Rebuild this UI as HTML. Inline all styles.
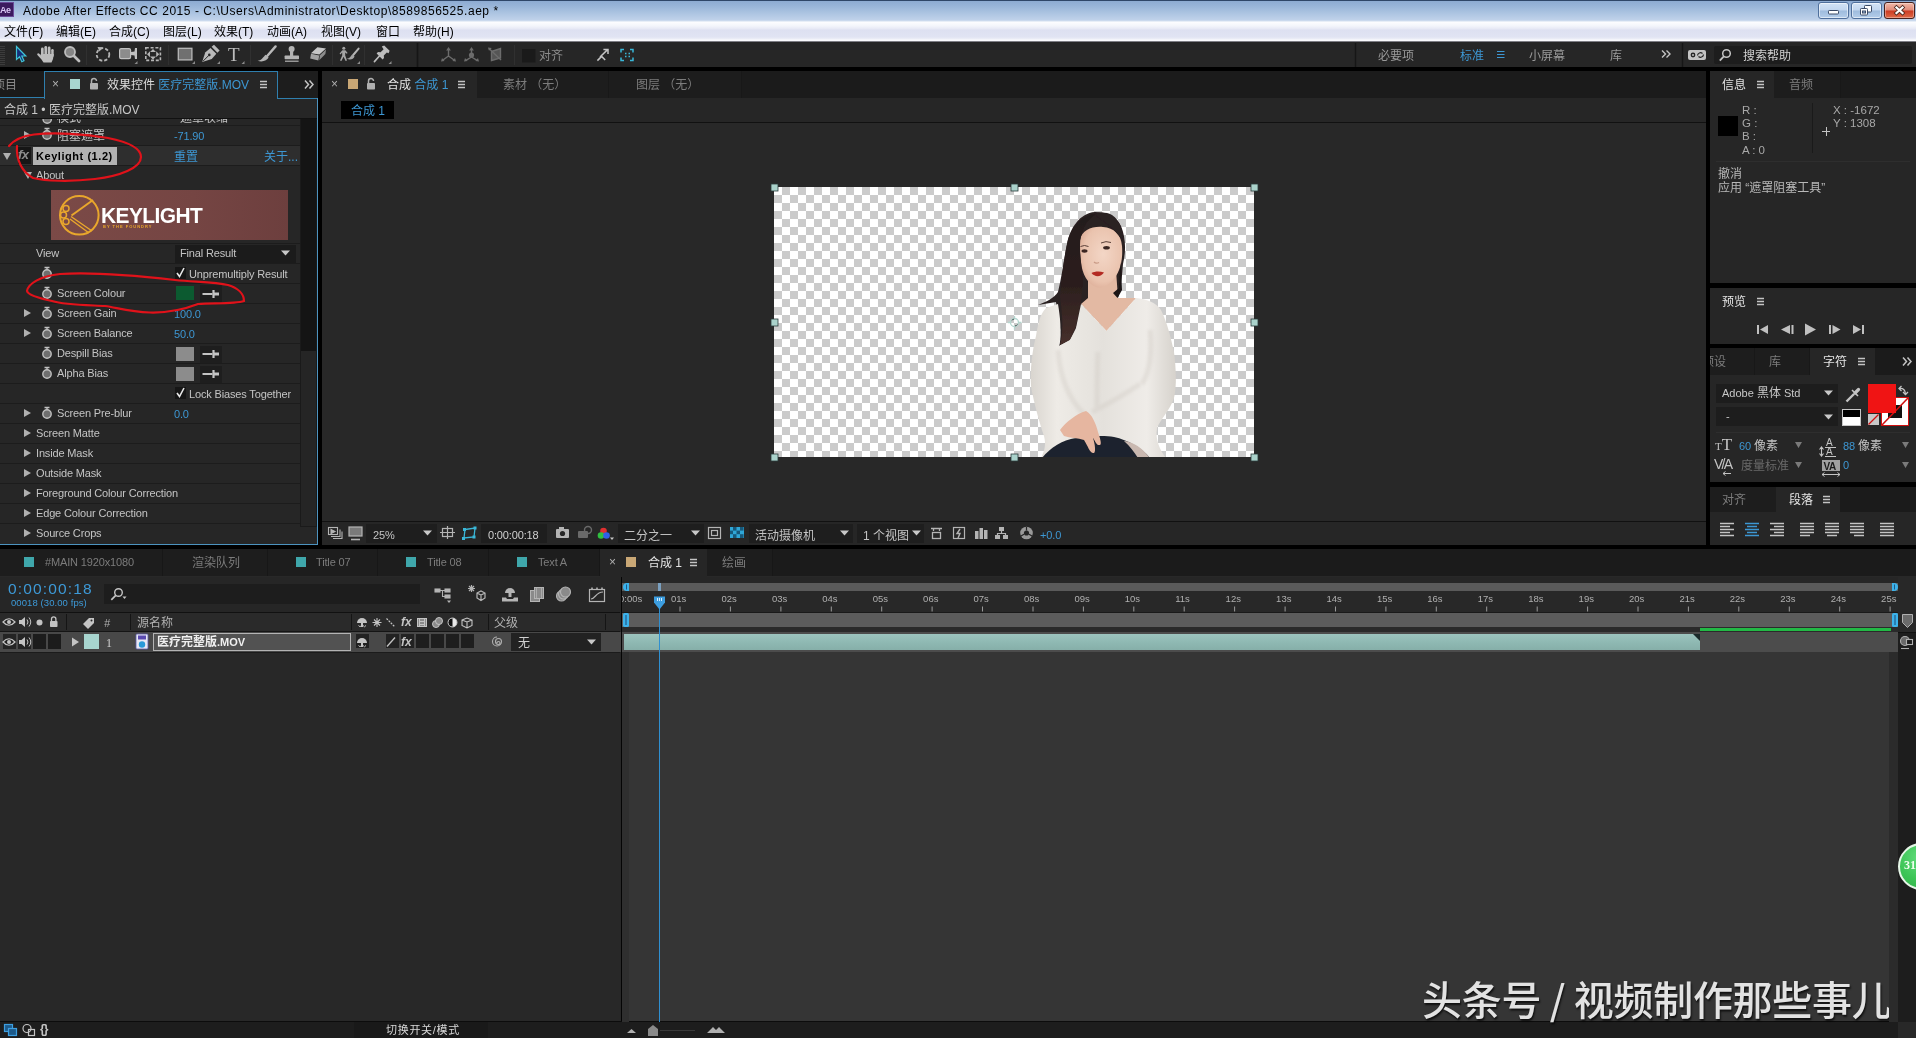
<!DOCTYPE html>
<html lang="zh">
<head>
<meta charset="utf-8">
<title>Adobe After Effects CC 2015</title>
<style>
*{box-sizing:border-box;margin:0;padding:0}
html,body{width:1916px;height:1038px;overflow:hidden;background:#000}
body{opacity:0.999;position:relative;font-family:"Liberation Sans","Noto Sans CJK SC",sans-serif;font-size:11px;color:#c4c4c4;line-height:1}
.a{position:absolute}
.t{position:absolute;white-space:nowrap;line-height:14px;height:14px}
.cj{font-size:12px}
.t.cj{margin-top:1px}
.blue{color:#3d97d3}
.en{letter-spacing:-0.15px}
.dim{color:#7d7d7d}
svg{position:absolute;overflow:visible}
/* title bar */
#title{left:0;top:0;width:1916px;height:22px;background:linear-gradient(#2f4668 0,#2f4668 1px,#8dabd2 1px,#98b4d8 6px,#a9c2e0 12px,#c0d2ea 20px,#d4e0f0 21px,#fbfcfe 22px)}
#menu{left:0;top:22px;width:1916px;height:20px;background:linear-gradient(#fdfdff 0,#f3f5fb 4px,#e6e8f5 7px,#dde0f1 8px,#e1e4f3 15px,#eceef7 17px,#fafafd 18px,#fafafd 19px,#8e8e96 19px,#6e6e74 20px)}
#menu .t{color:#000;font-size:12px;top:3px}
#toolbar{left:0;top:42px;width:1916px;height:25px;background:#262626}
/* generic panel colours */
.pbg{background:#262626}
.tabbar{background:#1b1b1b}
.row{position:absolute;left:0;width:300px;height:20px;border-top:1px solid #1c1c1c}
</style>
</head>
<body>
<!-- TITLE BAR -->
<div id="title" class="a"></div>
<div class="a" style="left:0;top:2px;width:14px;height:15px;background:#3b1a5e;border:1px solid #6b4a98;border-left:0"></div>
<div class="t" style="left:0;top:3px;font-size:9px;color:#d9c8f5;font-weight:bold;letter-spacing:-0.5px">Ae</div>
<div class="t" style="left:23px;top:4px;font-size:12px;color:#000;letter-spacing:0.55px">Adobe After Effects CC 2015 - C:\Users\Administrator\Desktop\8589856525.aep *</div>
<div class="a" style="left:1818px;top:2px;width:31px;height:17px;border:1px solid #4f6f9c;border-radius:3px;background:linear-gradient(#d3e3f6 0,#c2d6ef 48%,#9ebbdd 52%,#b4cdea 100%);box-shadow:inset 0 0 0 1px rgba(255,255,255,0.55)"></div>
<div class="a" style="left:1851px;top:2px;width:31px;height:17px;border:1px solid #4f6f9c;border-radius:3px;background:linear-gradient(#d3e3f6 0,#c2d6ef 48%,#9ebbdd 52%,#b4cdea 100%);box-shadow:inset 0 0 0 1px rgba(255,255,255,0.55)"></div>
<div class="a" style="left:1884px;top:2px;width:31px;height:17px;border:1px solid #47201c;border-radius:3px;background:linear-gradient(#f0b8a8 0,#e08a78 48%,#cc3a22 52%,#de6a48 100%);box-shadow:inset 0 0 0 1px rgba(255,255,255,0.35)"></div>
<svg style="left:0;top:0" width="1916" height="22" viewBox="0 0 1916 22"><rect x="1828.500" y="10.500" width="10" height="3.500" rx="0.800" fill="#fff" stroke="#3a4a66" stroke-width="1"/><g fill="#fff" stroke="#3a4a66" stroke-width="1"><rect x="1864.500" y="5.500" width="7" height="6.500" rx="0.800"/><rect x="1860.500" y="8.500" width="7" height="6.500" rx="0.800"/><rect x="1862.500" y="11" width="3" height="2" fill="#9ab4d6"/></g><path d="M1896.500 7.500l6 5.500M1902.500 7.500l-6 5.500" stroke="#4a2a22" stroke-width="3.800" stroke-linecap="square"/><path d="M1896.500 7.500l6 5.500M1902.500 7.500l-6 5.500" stroke="#fff" stroke-width="2.300" stroke-linecap="square"/></svg>
<!-- MENU BAR -->
<div id="menu" class="a">
<div class="t" style="left:4px">文件(F)</div>
<div class="t" style="left:56px">编辑(E)</div>
<div class="t" style="left:109px">合成(C)</div>
<div class="t" style="left:163px">图层(L)</div>
<div class="t" style="left:214px">效果(T)</div>
<div class="t" style="left:267px">动画(A)</div>
<div class="t" style="left:321px">视图(V)</div>
<div class="t" style="left:376px">窗口</div>
<div class="t" style="left:413px">帮助(H)</div>
</div>
<!-- TOOLBAR -->
<div id="toolbar" class="a"></div>
<!--TB-START--><div class="a" style="left:1714px;top:46px;width:198px;height:18px;background:#1d1d1d;border-radius:2px"></div><svg style="left:0;top:0" width="1916" height="1038" viewBox="0 0 1916 1038" fill="#b4b4b4" stroke="none">
<!-- grip -->
<g stroke="#3c3c3c" stroke-width="1"><path d="M0 46.5h5M0 48.5h5M0 50.5h5M0 52.5h5M0 54.5h5M0 56.5h5M0 58.5h5M0 60.5h5M0 62.5h5M0 64.5h5"/></g>
<!-- selection arrow -->
<path d="M16.5 46.5 L16.5 59.5 L19.6 56.8 L21.8 61.8 L24 60.8 L21.8 56 L25.8 56 Z" fill="#16307a" stroke="#3fc4d6" stroke-width="1.2" stroke-linejoin="miter"/>
<!-- hand -->
<g fill="#bdbdbd"><rect x="41" y="47.5" width="2.7" height="9" rx="1.3"/><rect x="44.4" y="46" width="2.7" height="10" rx="1.3"/><rect x="47.8" y="46.6" width="2.7" height="10" rx="1.3"/><rect x="51.2" y="49" width="2.5" height="8" rx="1.2"/><path d="M40.6 54 L53.8 54 L53 59 L51.5 62.5 L43.5 62.5 L41.5 59.5 L37.2 54.8 Q37 52.6 39 53.4 L41 55.5 Z"/></g>
<!-- magnifier -->
<circle cx="70" cy="52" r="5" fill="#858585" stroke="#bdbdbd" stroke-width="1.8"/><path d="M74 56 L79 61" stroke="#bdbdbd" stroke-width="2.8" stroke-linecap="round"/>
<!-- separators -->
<g stroke="#303030" stroke-width="1"><path d="M86.5 45v20M168.5 45v20M250.5 45v20M332.5 45v20M364.5 45v20M514.5 45v20"/></g>
<path d="M417.5 43v24" stroke="#161616" stroke-width="1.6"/>
<!-- rotate -->
<circle cx="103" cy="54.5" r="6.3" fill="none" stroke="#b4b4b4" stroke-width="1.8" stroke-dasharray="3.2 2"/><path d="M97.5 47 L103 47.2 L99.5 51.6 Z"/>
<!-- camera -->
<rect x="119.6" y="48.6" width="11" height="10" rx="1.6" fill="#8c8c8c" stroke="#c0c0c0" stroke-width="1.2"/><path d="M131 52 L134.5 51.5 L135 48 L137 48 L137 59 L135 59 L134.5 55.5 L131 55 Z" fill="#c0c0c0"/><path d="M137.5 61 v3 h-3 z" fill="#8a8a8a"/>
<!-- pan behind -->
<rect x="145.8" y="47.8" width="14.6" height="12.6" fill="none" stroke="#b4b4b4" stroke-width="1.6" stroke-dasharray="3 1.8"/><path d="M153 49 l3 3 h-6z M153 59.4 l3 -3 h-6z M147 54.2 l3 -3 v6z M159.2 54.2 l-3 -3 v6z" fill="#b4b4b4"/>
<!-- rectangle -->
<rect x="178.3" y="48.3" width="13.6" height="11.6" fill="#707070" stroke="#b9b9b9" stroke-width="1.3"/><path d="M195 61 v3 h-3 z M220 61 v3 h-3 z M244.5 61 v3 h-3 z M360 61 v3 h-3 z M391.5 61 v3 h-3 z" fill="#8a8a8a"/>
<!-- pen -->
<path d="M202.2 62 L205.2 52.5 L210.5 48 L216.3 53.8 L211.8 59 Z" fill="#b9b9b9"/><path d="M211.6 46.8 L214 44.8 L219.6 50.4 L217.4 52.8 Z" fill="#b9b9b9"/><path d="M203 61.2 L208.6 55.6" stroke="#262626" stroke-width="1"/><circle cx="209.3" cy="54.9" r="1.3" fill="#262626"/>
<!-- brush -->
<path d="M275.6 46.4 L267.2 56" stroke="#b9b9b9" stroke-width="2.4" stroke-linecap="round"/><path d="M257.6 60.8 C262 60.4 263.4 56.6 265.6 54.8 L268.6 57.6 C267 60.6 262.6 62.4 257.6 60.8 Z"/>
<!-- stamp -->
<circle cx="291.6" cy="49" r="3"/><rect x="290" y="50" width="3.2" height="6"/><rect x="284.6" y="55.6" width="14.4" height="3.6" rx="0.6"/><rect x="285" y="60.6" width="13.6" height="1.2"/>
<!-- eraser -->
<path d="M317.4 47.2 L326 48.4 L319.4 54.6 L311 53.2 Z" fill="#c6c6c6"/><path d="M311 53.8 L319.2 55.4 L318.4 60.4 L310.2 58.6 Z" fill="#a2a2a2"/><path d="M319.9 55.2 L326 49.4 L325.4 54 L319.2 60.2 Z" fill="#8c8c8c"/>
<!-- roto brush -->
<g fill="#a4a4a4"><circle cx="343.8" cy="48.2" r="1.5"/><path d="M342.4 50.2 L345.4 50.2 L347.6 53 L346.8 53.8 L345.2 52.6 L345.2 55.4 L347 60.6 L345.6 61 L343.6 56.8 L341.4 61 L340 60.4 L342.2 55.4 L342.2 52.6 L340.4 54.4 L339.6 53.6 Z"/><path d="M358.6 48.6 L353.2 55" stroke="#b4b4b4" stroke-width="2" stroke-linecap="round"/><path d="M346.6 58.6 C350 58.4 350.6 55.8 352.2 54.4 L354.6 56.6 C353.4 59.4 350 60.4 346.6 58.6 Z"/></g>
<!-- pin -->
<g fill="#bdbdbd"><path d="M381.8 46.4 L384.2 45.4 L389.6 50.8 L388.6 53.2 L386.8 52.4 L383.8 55.4 L384 58 L382.6 59.4 L376.6 53.4 L378 52 L380.6 52.2 L383.6 49.2 Z"/><path d="M379.4 56 L374.4 61.6" stroke="#bdbdbd" stroke-width="1.6" stroke-linecap="round"/></g>
<!-- axis icons (dim) -->
<g stroke="#6c6c6c" stroke-width="1.4" fill="#6c6c6c"><path d="M448.5 50v6M448.5 56l-5.5 4M448.5 56l5.5 4" fill="none"/><path d="M448.5 47l2.4 3.6h-4.8z M441 61.6l1-3.6 2.6 3z M456 61.6l-1-3.6-2.6 3z" stroke="none"/>
<path d="M471.5 50v6M471.5 57l-5.5 3.4M471.5 57l5.5 3.4" fill="none"/><circle cx="471.5" cy="55" r="2.6" stroke="none"/><path d="M471.5 47l2.4 3.6h-4.8z M464 61.6l1-3.6 2.6 3z M479 61.6l-1-3.6-2.6 3z" stroke="none"/>
<path d="M491.5 51.5 L500.5 48.5 L500.5 58 L491.5 60.5 Z" fill="#555" /><path d="M489 48.5 L501 60" fill="none"/><path d="M488 47.4l3.8 .6-2.8 2.8z" stroke="none"/></g>
<!-- snapping checkbox -->
<rect x="522" y="49" width="13.5" height="13.5" fill="#1a1a1a"/>
<!-- expand arrow -->
<g stroke="#c4c4c4" stroke-width="1.5" fill="none"><path d="M600 57 L607.6 49.6M603.4 49.4h4.6v4.6M597.4 60.6l4.2-4.2 3.6 3.6"/></g>
<!-- snap icon -->
<g stroke="#3ab7d8" stroke-width="1.5" fill="none"><path d="M621 52.5v-3h3M630 49.500h3v3M633 57.500v3h-3M624 60.500h-3v-3"/><path d="M625 53.500h1.500M628.500 53.500h1.500M625 56.500h1.500M628.500 56.500h1.500" stroke-width="1.6"/></g>
<!-- right side: workspace -->
<path d="M1355.500 43v24M1682.500 43v24" stroke="#161616" stroke-width="1.4"/>
<g stroke="#3d97d3" stroke-width="1.2"><path d="M1497 51.500h7.500M1497 54.500h7.500M1497 57.500h7.500"/></g>
<g stroke="#c4c4c4" stroke-width="1.4" fill="none"><path d="M1662 50.500l3.500 3.500-3.500 3.500M1666.500 50.500l3.500 3.500-3.500 3.500"/></g>
<rect x="1688" y="50" width="18" height="10" rx="2" fill="#c4c4c4"/><circle cx="1693" cy="55" r="2.400" fill="#262626"/><circle cx="1693" cy="55" r="1" fill="#c4c4c4"/><path d="M1697.500 55.500 a3 3 0 0 1 5 -2 M1703.500 54.500 a3 3 0 0 1 -5 2" stroke="#262626" stroke-width="1.200" fill="none"/>
<circle cx="1726.500" cy="53.500" r="3.800" fill="none" stroke="#c4c4c4" stroke-width="1.500"/><path d="M1723.800 56.400l-4 4.200" stroke="#c4c4c4" stroke-width="1.800"/>
</svg>
<div class="t" style="left:228px;top:44px;font-family:'Liberation Serif',serif;font-size:19px;line-height:21px;height:21px;color:#bdbdbd">T</div>
<div class="t cj" style="left:539px;top:48px;color:#8c8c8c">对齐</div>
<div class="t cj" style="left:1378px;top:48px;color:#9a9a9a">必要项</div>
<div class="t cj blue" style="left:1460px;top:48px">标准</div>
<div class="t cj" style="left:1529px;top:48px;color:#9a9a9a">小屏幕</div>
<div class="t cj" style="left:1610px;top:48px;color:#9a9a9a">库</div>
<div class="t cj" style="left:1743px;top:48px;color:#d0d0d0">搜索帮助</div>
<!--TB-END-->
<!-- LEFT PANEL -->
<div id="left" class="a pbg" style="left:0;top:71px;width:318px;height:474px"></div>
<!--LEFT-START--><div class="a" style="left:0;top:71px;width:318px;height:27px;background:#1d1d1d"></div>
<div class="a" style="left:0;top:71px;width:44px;height:27px;background:#1b1b1b;border-bottom:1px solid #2f7fae"></div>
<div class="a" style="left:44px;top:71px;width:234px;height:28px;background:#262626;border:1px solid #2f7fae;border-bottom:0"></div>
<div class="a" style="left:277px;top:98px;width:41px;height:1px;background:#2f7fae"></div>
<div class="a" style="left:317px;top:98px;width:1px;height:447px;background:#4d93bf"></div>
<div class="a" style="left:0;top:544px;width:318px;height:1px;background:#4d93bf"></div>
<div class="t cj" style="left:-7px;top:77px;color:#8a8a8a">项目</div>
<div class="t" style="left:52px;top:77px;font-size:12px;color:#b0b0b0">×</div>
<div class="a" style="left:70px;top:79px;width:10px;height:10px;background:#a8d5cf"></div>
<div class="t cj" style="left:107px;top:77px;color:#dcdcdc">效果控件 <span class="blue">医疗完整版.MOV</span></div>
<div class="t cj" style="left:4px;top:102px;color:#c8c8c8">合成 1 • 医疗完整版.MOV</div>
<div class="a" style="left:0;top:118px;width:317px;height:1px;background:#111"></div>
<div class="a" style="left:300px;top:119px;width:17px;height:408px;background:#252525;border:1px solid #1a1a1a"></div>
<div class="a" style="left:301px;top:119px;width:15px;height:232px;background:#141414"></div>
<div class="a" style="left:0;top:125px;width:300px;height:1px;background:#1c1c1c"></div>
<div class="a" style="left:0;top:145px;width:300px;height:1px;background:#1c1c1c"></div>
<div class="a" style="left:0;top:165px;width:300px;height:1px;background:#1c1c1c"></div>
<div class="a" style="left:0;top:243px;width:300px;height:1px;background:#1c1c1c"></div>
<div class="a" style="left:0;top:263px;width:300px;height:1px;background:#1c1c1c"></div>
<div class="a" style="left:0;top:283px;width:300px;height:1px;background:#1c1c1c"></div>
<div class="a" style="left:0;top:303px;width:300px;height:1px;background:#1c1c1c"></div>
<div class="a" style="left:0;top:323px;width:300px;height:1px;background:#1c1c1c"></div>
<div class="a" style="left:0;top:343px;width:300px;height:1px;background:#1c1c1c"></div>
<div class="a" style="left:0;top:363px;width:300px;height:1px;background:#1c1c1c"></div>
<div class="a" style="left:0;top:383px;width:300px;height:1px;background:#1c1c1c"></div>
<div class="a" style="left:0;top:403px;width:300px;height:1px;background:#1c1c1c"></div>
<div class="a" style="left:0;top:423px;width:300px;height:1px;background:#1c1c1c"></div>
<div class="a" style="left:0;top:443px;width:300px;height:1px;background:#1c1c1c"></div>
<div class="a" style="left:0;top:463px;width:300px;height:1px;background:#1c1c1c"></div>
<div class="a" style="left:0;top:483px;width:300px;height:1px;background:#1c1c1c"></div>
<div class="a" style="left:0;top:503px;width:300px;height:1px;background:#1c1c1c"></div>
<div class="a" style="left:0;top:523px;width:300px;height:1px;background:#1c1c1c"></div>
<div class="a" style="left:0;top:119px;width:300px;height:6px;overflow:hidden"><div class="t cj" style="left:57px;top:-9px">模式</div><div class="t cj" style="left:180px;top:-9px">遮罩收缩</div></div>
<div class="a" style="left:0;top:146px;width:300px;height:19px;background:#2e2e2e"></div>
<div class="a" style="left:33px;top:147px;width:84px;height:18px;background:#b2b2b2"></div>
<div class="t" style="left:36px;top:149px;color:#000;font-weight:bold;font-size:11px;letter-spacing:0.55px">Keylight (1.2)</div>
<div class="a" style="left:18px;top:147px;width:13px;height:17px;background:#161616"></div>
<div class="t" style="left:18px;top:148px;color:#8e8e8e;font-style:italic;font-weight:bold;font-size:13px;letter-spacing:-0.5px">fx</div>
<div class="t cj blue" style="left:174px;top:149px">重置</div>
<div class="t cj blue" style="left:264px;top:149px">关于...</div>
<div class="t cj" style="left:57px;top:128px">阻塞遮罩</div>
<div class="t en blue" style="left:174px;top:129px">-71.90</div>
<div class="t en " style="left:36px;top:168px">About</div>
<div class="t en " style="left:36px;top:246px">View</div>
<div class="a" style="left:175px;top:245px;width:121px;height:18px;background:#1b1b1b"></div>
<div class="t en " style="left:180px;top:246px">Final Result</div>
<div class="t en " style="left:189px;top:267px">Unpremultiply Result</div>
<div class="t en " style="left:57px;top:286px">Screen Colour</div>
<div class="t en " style="left:57px;top:306px">Screen Gain</div>
<div class="t en blue" style="left:174px;top:307px">100.0</div>
<div class="t en " style="left:57px;top:326px">Screen Balance</div>
<div class="t en blue" style="left:174px;top:327px">50.0</div>
<div class="t en " style="left:57px;top:346px">Despill Bias</div>
<div class="t en " style="left:57px;top:366px">Alpha Bias</div>
<div class="t en " style="left:189px;top:387px">Lock Biases Together</div>
<div class="t en " style="left:57px;top:406px">Screen Pre-blur</div>
<div class="t en blue" style="left:174px;top:407px">0.0</div>
<div class="t en " style="left:36px;top:426px">Screen Matte</div>
<div class="t en " style="left:36px;top:446px">Inside Mask</div>
<div class="t en " style="left:36px;top:466px">Outside Mask</div>
<div class="t en " style="left:36px;top:486px">Foreground Colour Correction</div>
<div class="t en " style="left:36px;top:506px">Edge Colour Correction</div>
<div class="t en " style="left:36px;top:526px">Source Crops</div>
<div class="a" style="left:176px;top:286px;width:18px;height:14px;background:#0c5a30"></div>
<div class="a" style="left:176px;top:347px;width:18px;height:14px;background:#8c8c8c"></div>
<div class="a" style="left:176px;top:367px;width:18px;height:14px;background:#8c8c8c"></div>
<div class="a" style="left:200px;top:285px;width:22px;height:17px;background:#1e1e1e"></div>
<div class="a" style="left:200px;top:346px;width:22px;height:17px;background:#1e1e1e"></div>
<div class="a" style="left:200px;top:366px;width:22px;height:17px;background:#1e1e1e"></div>
<div class="a" style="left:175px;top:267px;width:11px;height:12px;background:#161616"></div>
<div class="a" style="left:175px;top:387px;width:11px;height:12px;background:#161616"></div>
<div class="a" style="left:51px;top:190px;width:237px;height:50px;background:linear-gradient(90deg,#7b4a47,#754543 60%,#6d3f3e)"></div>
<div class="t" style="left:101px;top:203px;font-size:22px;line-height:26px;height:26px;font-weight:bold;color:#fff;letter-spacing:-0.6px;transform:scaleX(0.95);transform-origin:0 0">KEYLIGHT</div>
<div class="t" style="left:103px;top:224px;font-size:4px;line-height:6px;height:6px;font-weight:bold;color:#e9a72c;letter-spacing:1px">BY THE FOUNDRY</div>
<svg style="left:0;top:0" width="1916" height="1038" viewBox="0 0 1916 1038">
<g fill="#b0b0b0"><rect x="90" y="83" width="8" height="6.500" rx="0.800"/><path d="M91.500 83 v-2 a2.500 2.500 0 0 1 5 0" fill="none" stroke="#b0b0b0" stroke-width="1.500"/></g>
<g stroke="#c4c4c4" stroke-width="1.300"><path d="M260 81.500h7M260 84.500h7M260 87.500h7"/></g>
<g stroke="#c4c4c4" stroke-width="1.500" fill="none"><path d="M305 80.500l3.500 4-3.500 4M309.500 80.500l3.500 4-3.500 4"/></g>
<path d="M24 131 L31 135 L24 139 Z" fill="#b0b0b0"/>
<path d="M3 153 L11 153 L7 160 Z" fill="#b0b0b0"/>
<path d="M24 172 L32 172 L28 179 Z" fill="#b0b0b0"/>
<path d="M24 309 L31 313 L24 317 Z" fill="#b0b0b0"/>
<path d="M24 329 L31 333 L24 337 Z" fill="#b0b0b0"/>
<path d="M24 409 L31 413 L24 417 Z" fill="#b0b0b0"/>
<path d="M24 429 L31 433 L24 437 Z" fill="#b0b0b0"/>
<path d="M24 449 L31 453 L24 457 Z" fill="#b0b0b0"/>
<path d="M24 469 L31 473 L24 477 Z" fill="#b0b0b0"/>
<path d="M24 489 L31 493 L24 497 Z" fill="#b0b0b0"/>
<path d="M24 509 L31 513 L24 517 Z" fill="#b0b0b0"/>
<path d="M24 529 L31 533 L24 537 Z" fill="#b0b0b0"/>
<circle cx="47" cy="135" r="4.200" fill="#6e6e6e" stroke="#c0c0c0" stroke-width="1.400"/><path d="M44.5 128.5h5M47 128.5v2" stroke="#c0c0c0" stroke-width="1.400" fill="none"/>
<circle cx="47" cy="274" r="4.200" fill="#6e6e6e" stroke="#c0c0c0" stroke-width="1.400"/><path d="M44.5 267.5h5M47 267.5v2" stroke="#c0c0c0" stroke-width="1.400" fill="none"/>
<circle cx="47" cy="294" r="4.200" fill="#6e6e6e" stroke="#c0c0c0" stroke-width="1.400"/><path d="M44.5 287.5h5M47 287.5v2" stroke="#c0c0c0" stroke-width="1.400" fill="none"/>
<circle cx="47" cy="314" r="4.200" fill="#6e6e6e" stroke="#c0c0c0" stroke-width="1.400"/><path d="M44.5 307.5h5M47 307.5v2" stroke="#c0c0c0" stroke-width="1.400" fill="none"/>
<circle cx="47" cy="334" r="4.200" fill="#6e6e6e" stroke="#c0c0c0" stroke-width="1.400"/><path d="M44.5 327.5h5M47 327.5v2" stroke="#c0c0c0" stroke-width="1.400" fill="none"/>
<circle cx="47" cy="354" r="4.200" fill="#6e6e6e" stroke="#c0c0c0" stroke-width="1.400"/><path d="M44.5 347.5h5M47 347.5v2" stroke="#c0c0c0" stroke-width="1.400" fill="none"/>
<circle cx="47" cy="374" r="4.200" fill="#6e6e6e" stroke="#c0c0c0" stroke-width="1.400"/><path d="M44.5 367.5h5M47 367.5v2" stroke="#c0c0c0" stroke-width="1.400" fill="none"/>
<circle cx="47" cy="414" r="4.200" fill="#6e6e6e" stroke="#c0c0c0" stroke-width="1.400"/><path d="M44.5 407.5h5M47 407.5v2" stroke="#c0c0c0" stroke-width="1.400" fill="none"/>
<path d="M43 119 a4.200 4.200 0 0 0 8.400 0" fill="#6e6e6e" stroke="#c0c0c0" stroke-width="1.400"/>
<path d="M281 250.500h9l-4.500 5z" fill="#c8c8c8"/>
<path d="M177 273l2.500 3.500 4.500-8.500" stroke="#e8e8e8" stroke-width="1.600" fill="none"/>
<path d="M177 393l2.500 3.500 4.500-8.500" stroke="#e8e8e8" stroke-width="1.600" fill="none"/>
<g stroke="#c4c4c4" fill="#c4c4c4"><path d="M202.500 294h10" stroke-width="2"/><path d="M213.500 290v8" stroke-width="2.200"/><path d="M214 294h5" stroke-width="3"/></g>
<g stroke="#c4c4c4" fill="#c4c4c4"><path d="M202.500 354h10" stroke-width="2"/><path d="M213.500 350v8" stroke-width="2.200"/><path d="M214 354h5" stroke-width="3"/></g>
<g stroke="#c4c4c4" fill="#c4c4c4"><path d="M202.500 374h10" stroke-width="2"/><path d="M213.500 370v8" stroke-width="2.200"/><path d="M214 374h5" stroke-width="3"/></g>
<g stroke="#e9a72c" stroke-width="2" fill="none"><circle cx="79.300" cy="215.300" r="19.300"/><path d="M93 200 L71.500 215.500"/><path d="M71 216.500 L92 231 M70 219 L89 233" stroke-width="1.400"/><circle cx="66" cy="208.500" r="3" stroke-width="1.500"/><circle cx="63.500" cy="215" r="3" stroke-width="1.500"/><circle cx="66" cy="221.500" r="3" stroke-width="1.500"/></g>
<g stroke="#e0121a" stroke-width="2.200" fill="none" stroke-linecap="round"><path d="M9 146 C14 140 22 136 34 134.500 C55 132 85 134 108 138 C128 142 141 148 141 157 C141 168 120 176 95 179 C70 182 45 181 33 178 C22 172 16 160 17 146"/><path d="M60 274 C90 272 140 276 175 280 C195 282 215 282 228 285 C238 288 244 294 244 301 C235 304 215 303 198 304 C185 309 170 313 150 312.500 C130 312 118 308 105 306 C85 305 65 305 52 301 C38 298 28 295 27 291 C28 284 40 276 60 274"/></g>
</svg><!--LEFT-END-->
<!-- COMP PANEL -->
<div id="comp" class="a" style="left:322px;top:71px;width:1384px;height:474px;background:#282828"></div>
<!--COMP-START--><div class="a" style="left:322px;top:71px;width:1384px;height:27px;background:#1b1b1b"></div>
<div class="a" style="left:322px;top:71px;width:155px;height:28px;background:#262626"></div>
<div class="a" style="left:477px;top:71px;width:132px;height:27px;background:#1d1d1d;border-right:1px solid #181818"></div>
<div class="a" style="left:609px;top:71px;width:133px;height:27px;background:#1d1d1d;border-right:1px solid #181818"></div>
<div class="a" style="left:322px;top:98px;width:1384px;height:24px;background:#262626"></div>
<div class="a" style="left:322px;top:122px;width:1384px;height:1px;background:#111"></div>
<div class="t" style="left:331px;top:77px;font-size:12px;color:#b0b0b0">×</div>
<div class="a" style="left:348px;top:79px;width:10px;height:10px;background:#c9a775"></div>
<div class="t cj" style="left:387px;top:77px;color:#e4e4e4">合成 <span class="blue">合成 1</span></div>
<div class="t cj" style="left:503px;top:77px;color:#7c7c7c">素材 （无）</div>
<div class="t cj" style="left:636px;top:77px;color:#7c7c7c">图层 （无）</div>
<div class="a" style="left:341px;top:101px;width:53px;height:18px;background:#000"></div>
<div class="t cj blue" style="left:351px;top:103px">合成 1</div>
<div class="a" style="left:774px;top:187px;width:480px;height:270px;background-color:#fff;background-image:conic-gradient(#cbcbcb 0 25%,#fff 0 50%,#cbcbcb 0 75%,#fff 0);background-size:16px 16px;background-position:0 0"></div>
<div class="a" style="left:322px;top:521px;width:1384px;height:1px;background:#111"></div>
<div class="a" style="left:322px;top:522px;width:1384px;height:23px;background:#262626"></div>
<div class="a" style="left:366px;top:524px;width:71px;height:19px;background:#1e1e1e"></div>
<div class="a" style="left:481px;top:524px;width:66px;height:19px;background:#1e1e1e"></div>
<div class="a" style="left:618px;top:524px;width:86px;height:19px;background:#1e1e1e"></div>
<div class="a" style="left:749px;top:524px;width:104px;height:19px;background:#1e1e1e"></div>
<div class="a" style="left:857px;top:524px;width:67px;height:19px;background:#1e1e1e"></div>
<div class="t en" style="left:373px;top:528px">25%</div>
<div class="t en" style="left:488px;top:528px;color:#d0d0d0">0:00:00:18</div>
<div class="t cj" style="left:624px;top:528px">二分之一</div>
<div class="t cj" style="left:755px;top:528px">活动摄像机</div>
<div class="t cj" style="left:863px;top:528px">1 个视图</div>
<div class="t en blue" style="left:1040px;top:528px">+0.0</div>
<svg style="left:0;top:0" width="1916" height="1038" viewBox="0 0 1916 1038">
<defs><linearGradient id="sw" x1="0" x2="1" y1="0" y2="0"><stop offset="0" stop-color="#d9d5cf"/><stop offset="0.18" stop-color="#eeebe6"/><stop offset="0.5" stop-color="#e4e1dc"/><stop offset="0.8" stop-color="#efece8"/><stop offset="1" stop-color="#d6d2cc"/></linearGradient><linearGradient id="hr" x1="0" x2="0" y1="0" y2="1"><stop offset="0" stop-color="#231a1b"/><stop offset="0.55" stop-color="#2c1f1e"/><stop offset="1" stop-color="#47302b"/></linearGradient><radialGradient id="fc" cx="0.55" cy="0.45" r="0.65"><stop offset="0" stop-color="#f3d6c6"/><stop offset="0.7" stop-color="#eac3ae"/><stop offset="1" stop-color="#d9a892"/></radialGradient><filter id="sf2" x="-20%" y="-20%" width="140%" height="140%"><feGaussianBlur stdDeviation="1.6"/></filter><filter id="sf" x="-5%" y="-5%" width="110%" height="110%"><feGaussianBlur stdDeviation="0.45"/></filter><clipPath id="cv"><rect x="774" y="187" width="480" height="270"/></clipPath></defs>
<g clip-path="url(#cv)"><g filter="url(#sf)">
<path d="M1095 212 C1106 212 1116 216 1121 226 C1126 238 1126 252 1123 264 C1122 276 1121 290 1118 298 L1110 300 L1082 304 L1076 330 L1070 340 L1059 346 C1062 336 1060 326 1058 316 L1056 302 L1038 305 C1046 302 1054 298 1058 292 C1062 276 1064 258 1067 244 C1070 228 1080 213 1095 212 Z" fill="#2a2021"/>
<path d="M1088 276 L1116 270 L1118 298 L1136 298 L1106.500 331 L1081 304 L1088 298 Z" fill="#e3b9a3"/>
<path d="M1080 240 C1082 230 1092 226 1103 227 C1114 228 1121 234 1122 246 C1123 258 1121 270 1114 279 C1108 286 1101 289 1096 287 C1088 284 1082 274 1081 262 C1080 254 1079.500 246 1080 240 Z" fill="url(#fc)"/>
<path d="M1096 214 C1086 220 1080 232 1080 246 C1080 262 1083 274 1083 284 C1082 296 1080 310 1076 326 L1070 340 L1060 345 C1064 330 1062 312 1060 296 C1062 276 1064 256 1068 240 C1072 226 1082 215 1096 214 Z" fill="url(#hr)"/>
<path d="M1094 214 C1104 222 1114 228 1122 240 C1124 232 1120 220 1112 215 C1106 212 1100 212 1094 214 Z" fill="#2a2021"/>
<g fill="#3a2622"><ellipse cx="1084.500" cy="251" rx="3" ry="1.700"/><ellipse cx="1106.500" cy="247.800" rx="3.400" ry="1.800"/></g>
<path d="M1080.500 246.500 q4 -2 8 0 M1101 243 q5 -2.500 10 -0.500" stroke="#5a4038" stroke-width="1" fill="none"/>
<path d="M1094 262 q2 2 5 0.500" stroke="#c99a86" stroke-width="1.200" fill="none"/>
<path d="M1091.500 273 C1095 271 1100 271 1104 272.500 C1101 277 1095 277.500 1091.500 273 Z" fill="#b32a22"/>
<path d="M1120.500 262 L1119 288 L1113 293 L1117.500 298 L1122 290 Z" fill="#1c1718"/>
<path d="M1081 304 L1106.500 331 L1136 298 C1146 299 1156 302 1161 310 C1167 322 1171 338 1174 352 C1176 368 1177 386 1174 398 C1170 410 1160 420 1157 428 C1155 440 1160 450 1166 458 L1041 458 C1045 450 1046 444 1044 436 C1040 424 1034 404 1031 386 C1030 370 1032 352 1036 336 C1038 324 1040 314 1046 308 L1058 304 C1060 316 1062 332 1059 346 L1070 340 L1076 328 Z" fill="url(#sw)"/>
<g stroke="#cfc9c2" stroke-width="5" fill="none" opacity="0.380" filter="url(#sf2)"><path d="M1058 350 C1060 380 1070 400 1084 414"/><path d="M1140 384 C1128 392 1108 404 1092 412"/><path d="M1098 352 C1097 370 1097 390 1097 408"/><path d="M1150 330 C1152 350 1150 372 1142 384"/></g>
<path d="M1042 458 C1050 448 1062 440 1076 438 C1090 436 1104 435 1114 437 C1128 440 1142 448 1150 458 Z" fill="#1d232d"/>
<path d="M1124 441 C1134 442 1142 448 1149 457 L1138 458 C1134 452 1130 446 1124 441 Z" fill="#c9b8b0"/>
<path d="M1060 430 C1066 422 1076 414 1086 411 C1092 414 1096 424 1098 432 C1100 438 1102 444 1100 445 C1096 446 1095 440 1093 438 C1095 444 1096 452 1094 453 C1090 454 1088 446 1084 440 C1078 438 1070 438 1064 436 Z" fill="#e6b6a0"/>
</g></g>
<rect x="771" y="184" width="7" height="7" fill="#aad2cb" stroke="#2a3b3a" stroke-width="0.800"/>
<rect x="1011" y="184" width="7" height="7" fill="#aad2cb" stroke="#2a3b3a" stroke-width="0.800"/>
<rect x="1251" y="184" width="7" height="7" fill="#aad2cb" stroke="#2a3b3a" stroke-width="0.800"/>
<rect x="771" y="319" width="7" height="7" fill="#aad2cb" stroke="#2a3b3a" stroke-width="0.800"/>
<rect x="1251" y="319" width="7" height="7" fill="#aad2cb" stroke="#2a3b3a" stroke-width="0.800"/>
<rect x="771" y="454" width="7" height="7" fill="#aad2cb" stroke="#2a3b3a" stroke-width="0.800"/>
<rect x="1011" y="454" width="7" height="7" fill="#aad2cb" stroke="#2a3b3a" stroke-width="0.800"/>
<rect x="1251" y="454" width="7" height="7" fill="#aad2cb" stroke="#2a3b3a" stroke-width="0.800"/>
<g stroke="#b4d6cf" stroke-width="1.300" fill="none"><circle cx="1014.500" cy="322.500" r="4"/><path d="M1014.500 316v3M1014.500 326v3.500M1008 322.500h3M1018 322.500h3.500"/><path d="M1011.700 320.500a3.400 3.400 0 0 1 2.500-1.400M1017.500 324.500a3.400 3.400 0 0 1-2.500 1.400" stroke="#4a5a58" stroke-width="1"/></g>
<g fill="#b0b0b0"><rect x="367" y="83" width="8" height="6.500" rx="0.800"/><path d="M368.500 83 v-2 a2.500 2.500 0 0 1 5 0" fill="none" stroke="#b0b0b0" stroke-width="1.500"/></g>
<g stroke="#c4c4c4" stroke-width="1.300"><path d="M458 81.500h7M458 84.500h7M458 87.500h7"/></g>
<g stroke="#b4b4b4" stroke-width="1.100" fill="none"><rect x="328.500" y="527.500" width="9" height="7"/><path d="M331 536.500h9v-7M333 538.500h9v-7"/><path d="M331 529.500l4 2-4 2z" fill="#b4b4b4"/></g>
<rect x="349" y="527" width="13" height="9" fill="#7a7a7a" stroke="#b4b4b4" stroke-width="1.200"/><path d="M351 539.500h9" stroke="#b4b4b4" stroke-width="1.600"/>
<path d="M423 530.500h9l-4.500 5z M691 530.500h9l-4.500 5z M840 530.500h9l-4.500 5z M912 530.500h9l-4.500 5z" fill="#c8c8c8"/>
<g stroke="#b4b4b4" stroke-width="1.200" fill="none"><rect x="442.500" y="528.500" width="10" height="8"/><path d="M447.500 526v13M440 532.500h15"/></g>
<g stroke="#3ab7d8" stroke-width="1.300" fill="none"><path d="M465 529.500l10-1.500-1 9-10 1z"/></g><g fill="#3ab7d8"><rect x="463" y="528" width="3" height="3"/><rect x="473.500" y="526.500" width="3" height="3"/><rect x="472.500" y="535.500" width="3" height="3"/><rect x="462" y="537" width="3" height="3"/></g>
<rect x="556" y="529" width="13" height="9" rx="1" fill="#b4b4b4"/><rect x="559" y="527" width="5" height="3" fill="#b4b4b4"/><circle cx="562.500" cy="533.500" r="2.600" fill="#262626"/>
<g fill="#6a6a6a"><rect x="578" y="531" width="10" height="7" rx="1"/><circle cx="588" cy="530" r="3.500" fill="none" stroke="#6a6a6a" stroke-width="1.400"/></g>
<circle cx="603.500" cy="531" r="3.300" fill="#e03030"/><circle cx="601" cy="535.500" r="3.300" fill="#30c040"/><circle cx="606.500" cy="535.500" r="3.300" fill="#3060e8"/><path d="M610 537.500h4l-2 2.500z" fill="#c8c8c8"/>
<g stroke="#b4b4b4" stroke-width="1.200" fill="none"><rect x="708.500" y="527.500" width="12" height="11"/><rect x="711.500" y="530.500" width="6" height="5"/></g>
<rect x="730" y="527" width="14" height="11" fill="#2fa6d6"/><g fill="#16587a"><rect x="733" y="527" width="3.500" height="3.600"/><rect x="740" y="527" width="3.500" height="3.600"/><rect x="730" y="530.600" width="3" height="3.600"/><rect x="736.500" y="530.600" width="3.500" height="3.600"/><rect x="733" y="534.200" width="3.500" height="3.800"/><rect x="740" y="534.200" width="3.500" height="3.800"/></g>
<g stroke="#b4b4b4" stroke-width="1.300" fill="none"><path d="M931 528.500h11M933.500 528v3M939.500 528v3"/><rect x="932.500" y="532.500" width="8" height="6"/></g>
<g stroke="#b4b4b4" stroke-width="1.200" fill="none"><rect x="953.500" y="527.500" width="11" height="11"/><path d="M960 529l-3 4.500h3l-2 4.500" stroke-width="1.400"/></g>
<g fill="#b4b4b4"><rect x="975" y="531" width="3.500" height="8"/><rect x="979.500" y="528" width="3.500" height="11"/><rect x="984" y="530" width="3.500" height="9"/></g>
<g fill="#b4b4b4"><rect x="999" y="527" width="5" height="4"/><rect x="995" y="535" width="5" height="4"/><rect x="1003" y="535" width="5" height="4"/><path d="M1001.500 531v2.500M997.500 535v-1.500h8v1.500" stroke="#b4b4b4" stroke-width="1.200" fill="none"/></g>
<circle cx="1026.500" cy="533" r="6.300" fill="#9a9a9a"/><circle cx="1026.500" cy="533" r="2.600" fill="#262626"/><path d="M1026.500 527v3.500M1032 536l-3-1.700M1021 536l3-1.700" stroke="#262626" stroke-width="1.200"/>
</svg><!--COMP-END-->
<!-- RIGHT PANELS -->
<!--RIGHT-START--><div class="a" style="left:1710px;top:71px;width:206px;height:212px;background:#262626"></div>
<div class="a" style="left:1710px;top:71px;width:206px;height:27px;background:#1b1b1b"></div>
<div class="a" style="left:1710px;top:71px;width:64px;height:28px;background:#262626"></div>
<div class="a" style="left:1774px;top:71px;width:67px;height:27px;background:#1d1d1d;border-right:1px solid #181818"></div>
<div class="t cj" style="left:1722px;top:77px;color:#e4e4e4">信息</div>
<div class="t cj" style="left:1789px;top:77px;color:#7c7c7c">音频</div>
<div class="a" style="left:1718px;top:116px;width:20px;height:20px;background:#000"></div>
<div class="t" style="left:1742px;top:103px;font-size:11.500px;letter-spacing:0px;color:#a8a8a8">R :</div>
<div class="t" style="left:1742px;top:116px;font-size:11.500px;letter-spacing:0px;color:#a8a8a8">G :</div>
<div class="t" style="left:1742px;top:129px;font-size:11.500px;letter-spacing:0px;color:#a8a8a8">B :</div>
<div class="t" style="left:1742px;top:143px;font-size:11.500px;letter-spacing:0px;color:#a8a8a8">A :  0</div>
<div class="t" style="left:1833px;top:103px;font-size:11.500px;letter-spacing:0px;color:#a8a8a8">X : -1672</div>
<div class="t" style="left:1833px;top:116px;font-size:11.500px;letter-spacing:0px;color:#a8a8a8">Y :  1308</div>
<div class="a" style="left:1812px;top:103px;width:1px;height:50px;background:#1a1a1a"></div>
<div class="a" style="left:1716px;top:161px;width:194px;height:1px;background:#2e2e2e"></div>
<div class="t cj" style="left:1718px;top:166px;color:#b8b8b8">撤消</div>
<div class="t cj" style="left:1718px;top:180px;color:#b8b8b8">应用 “遮罩阻塞工具”</div>
<div class="a" style="left:1710px;top:288px;width:206px;height:56px;background:#262626"></div>
<div class="t cj" style="left:1722px;top:294px;color:#e4e4e4">预览</div>
<div class="a" style="left:1710px;top:348px;width:206px;height:134px;background:#262626"></div>
<div class="a" style="left:1710px;top:348px;width:206px;height:27px;background:#1b1b1b"></div>
<div class="a" style="left:1710px;top:348px;width:45px;height:27px;background:#1d1d1d;border-right:1px solid #181818"></div>
<div class="a" style="left:1755px;top:348px;width:55px;height:27px;background:#1d1d1d;border-right:1px solid #181818"></div>
<div class="a" style="left:1810px;top:348px;width:65px;height:28px;background:#262626"></div>
<div class="a" style="left:1710px;top:348px;width:30px;height:27px;overflow:hidden"><div class="t cj" style="left:-8px;top:6px;color:#7c7c7c">预设</div></div>
<div class="t cj" style="left:1769px;top:354px;color:#7c7c7c">库</div>
<div class="t cj" style="left:1823px;top:354px;color:#e4e4e4">字符</div>
<div class="a" style="left:1716px;top:384px;width:122px;height:19px;background:#1d1d1d"></div>
<div class="a" style="left:1716px;top:407px;width:122px;height:19px;background:#1d1d1d"></div>
<div class="t" style="left:1722px;top:386px;color:#c8c8c8;font-size:11px">Adobe <span class="cj">黑体</span> Std</div>
<div class="t" style="left:1726px;top:409px;color:#c8c8c8">-</div>
<div class="a" style="left:1716px;top:432px;width:194px;height:1px;background:#2e2e2e"></div>
<div class="t" style="left:1715px;top:436px;font-family:'Liberation Serif',serif;color:#c4c4c4;font-size:11px;line-height:18px;height:18px">T<span style="font-size:17px">T</span></div>
<div class="t" style="left:1739px;top:439px"><span class="blue en">60</span> <span class="cj">像素</span></div>
<div class="t" style="left:1843px;top:439px"><span class="blue en">88</span> <span class="cj">像素</span></div>
<div class="t cj" style="left:1741px;top:458px;color:#6a6a6a">度量标准</div>
<div class="t blue en" style="left:1843px;top:458px">0</div>
<div class="t" style="left:1826px;top:438px;font-size:10px;color:#c4c4c4;line-height:10px;height:10px">A</div>
<div class="t" style="left:1826px;top:447px;font-size:10px;color:#c4c4c4;line-height:10px;height:10px">A</div>
<div class="t" style="left:1714px;top:456px;font-size:14px;color:#c4c4c4;letter-spacing:-1.8px;line-height:16px;height:16px">V/A</div>
<div class="a" style="left:1710px;top:487px;width:206px;height:58px;background:#262626"></div>
<div class="a" style="left:1710px;top:487px;width:206px;height:25px;background:#1b1b1b"></div>
<div class="a" style="left:1710px;top:487px;width:66px;height:25px;background:#1d1d1d"></div>
<div class="a" style="left:1776px;top:487px;width:64px;height:26px;background:#262626"></div>
<div class="t cj" style="left:1722px;top:492px;color:#7c7c7c">对齐</div>
<div class="t cj" style="left:1789px;top:492px;color:#e4e4e4">段落</div>
<svg style="left:0;top:0" width="1916" height="1038" viewBox="0 0 1916 1038">
<g stroke="#c4c4c4" stroke-width="1.300"><path d="M1757 81.500h7M1757 84.500h7M1757 87.500h7"/></g>
<path d="M1822 131.500h8M1826.500 127v9" stroke="#c4c4c4" stroke-width="1"/>
<g stroke="#c4c4c4" stroke-width="1.300"><path d="M1757 298.500h7M1757 301.500h7M1757 304.500h7"/></g>
<g fill="#c0c0c0"><rect x="1757" y="325" width="2" height="9"/><path d="M1768 325v9l-8-4.500z"/><path d="M1790 325v9l-9-4.500z"/><rect x="1791.500" y="325" width="2" height="9"/><path d="M1805 323.500v12l11-6z"/><rect x="1829" y="325" width="2" height="9"/><path d="M1832.500 325v9l8-4.500z"/><path d="M1853 325v9l8-4.500z"/><rect x="1862" y="325" width="2" height="9"/></g>
<g stroke="#c4c4c4" stroke-width="1.300"><path d="M1858 358.500h7M1858 361.500h7M1858 364.500h7"/></g>
<g stroke="#c4c4c4" stroke-width="1.500" fill="none"><path d="M1903 357.500l3.500 4-3.500 4M1907.500 357.500l3.500 4-3.500 4"/></g>
<path d="M1824 390.500h9l-4.500 5z M1824 414.500h9l-4.500 5z" fill="#c8c8c8"/>
<g stroke="#c4c4c4" fill="none"><path d="M1846.500 401.500l7.500-7.500" stroke-width="2.400"/><path d="M1852 390l6 6" stroke-width="1.600"/><path d="M1855 393l3.500-3.500" stroke-width="3.200" stroke-linecap="round"/></g>
<rect x="1881.500" y="397.500" width="27" height="28" fill="#fff" stroke="#d01010" stroke-width="1"/><rect x="1888" y="405" width="14" height="13" fill="#111"/><path d="M1881.500 425.500L1908.500 397.500" stroke="#d01010" stroke-width="1.600"/>
<rect x="1868" y="384" width="28" height="29" fill="#f01414"/>
<g stroke="#c4c4c4" stroke-width="1.300" fill="none"><path d="M1899.500 388.500q6 -0.500 6 6"/><path d="M1901.500 386l-2.500 2.500 2.500 2.500M1903 392l2.500 2.500 2.500-2.500"/></g>
<rect x="1842.500" y="409.500" width="18" height="16" fill="#fff" stroke="#c8c8c8" stroke-width="1"/><rect x="1843" y="410" width="17" height="7" fill="#000"/>
<rect x="1868" y="414" width="11" height="11" fill="#c8c8c8"/><path d="M1868.500 424.500l10-10" stroke="#d01010" stroke-width="1.300"/>
<path d="M1795 442h7l-3.500 6z M1902 442h7l-3.500 6z M1795 462h7l-3.500 6z M1902 462h7l-3.500 6z" fill="#7a7a7a"/>
<g stroke="#c4c4c4" stroke-width="1.100" fill="none"><path d="M1821.500 447v9M1819.500 449.500l2-2.500 2 2.500M1819.500 453.500l2 2.500 2-2.500"/><path d="M1825 447.500h11M1825 456.500h11"/></g>
<path d="M1723 473.500h8M1725.500 471.500l-2.500 2 2.500 2" stroke="#c4c4c4" stroke-width="1" fill="none"/>
<rect x="1822" y="460" width="18" height="11" fill="#a0a0a0"/><path d="M1822 474.500h18M1824.500 472.500l-2.500 2 2.500 2M1837.500 472.500l2.500 2-2.500 2" stroke="#c4c4c4" stroke-width="1" fill="none"/>
<text x="1823.500" y="469.500" font-size="10" font-weight="bold" fill="#1a1a1a" letter-spacing="-0.5" font-family="Liberation Sans, sans-serif">VA</text>
<g stroke="#c4c4c4" stroke-width="1.300"><path d="M1823 496.500h7M1823 499.500h7M1823 502.500h7"/></g>
<path d="M1720 523.5h14M1720 526.5h10M1720 529.5h14M1720 532.5h10M1720 535.5h14" stroke="#c4c4c4" stroke-width="1.300" fill="none"/>
<path d="M1745 523.5h14M1747 526.5h10M1745 529.5h14M1747 532.5h10M1745 535.5h14" stroke="#3d97d3" stroke-width="1.300" fill="none"/>
<path d="M1770 523.5h14M1774 526.5h10M1770 529.5h14M1774 532.5h10M1770 535.5h14" stroke="#c4c4c4" stroke-width="1.300" fill="none"/>
<path d="M1800 523.5h14M1800 526.5h14M1800 529.5h14M1800 532.5h14M1800 535.5h10" stroke="#c4c4c4" stroke-width="1.300" fill="none"/>
<path d="M1825 523.5h14M1825 526.5h14M1825 529.5h14M1825 532.5h14M1827 535.5h10" stroke="#c4c4c4" stroke-width="1.300" fill="none"/>
<path d="M1850 523.5h14M1850 526.5h14M1850 529.5h14M1850 532.5h14M1854 535.5h10" stroke="#c4c4c4" stroke-width="1.300" fill="none"/>
<path d="M1880 523.5h14M1880 526.5h14M1880 529.5h14M1880 532.5h14M1880 535.5h14" stroke="#c4c4c4" stroke-width="1.300" fill="none"/>
</svg><!--RIGHT-END-->
<!-- TIMELINE -->
<!--TIMELINE-START--><div class="a" style="left:0;top:549px;width:1916px;height:489px;background:#282828"></div>
<div class="a" style="left:0;top:549px;width:1916px;height:27px;background:#1b1b1b"></div>
<div class="a" style="left:0px;top:549px;width:163px;height:27px;background:#1d1d1d;border-right:1px solid #171717"></div>
<div class="a" style="left:163px;top:549px;width:105px;height:27px;background:#1d1d1d;border-right:1px solid #171717"></div>
<div class="a" style="left:268px;top:549px;width:110px;height:27px;background:#1d1d1d;border-right:1px solid #171717"></div>
<div class="a" style="left:378px;top:549px;width:111px;height:27px;background:#1d1d1d;border-right:1px solid #171717"></div>
<div class="a" style="left:489px;top:549px;width:111px;height:27px;background:#1d1d1d;border-right:1px solid #171717"></div>
<div class="a" style="left:600px;top:549px;width:107px;height:28px;background:#262626"></div>
<div class="a" style="left:707px;top:549px;width:66px;height:27px;background:#1d1d1d;border-right:1px solid #171717"></div>
<div class="a" style="left:24px;top:557px;width:10px;height:10px;background:#3fa7ab"></div>
<div class="a" style="left:296px;top:557px;width:10px;height:10px;background:#3fa7ab"></div>
<div class="a" style="left:406px;top:557px;width:10px;height:10px;background:#3fa7ab"></div>
<div class="a" style="left:517px;top:557px;width:10px;height:10px;background:#3fa7ab"></div>
<div class="a" style="left:626px;top:557px;width:10px;height:10px;background:#c9a775"></div>
<div class="t en" style="left:45px;top:555px;color:#7c7c7c">#MAIN 1920x1080</div>
<div class="t cj" style="left:192px;top:555px;color:#7c7c7c">渲染队列</div>
<div class="t en" style="left:316px;top:555px;color:#7c7c7c">Title 07</div>
<div class="t en" style="left:427px;top:555px;color:#7c7c7c">Title 08</div>
<div class="t en" style="left:538px;top:555px;color:#7c7c7c">Text A</div>
<div class="t" style="left:609px;top:555px;font-size:12px;color:#b0b0b0">×</div>
<div class="t cj" style="left:648px;top:555px;color:#e4e4e4">合成 1</div>
<div class="t cj" style="left:722px;top:555px;color:#7c7c7c">绘画</div>
<div class="a" style="left:0;top:577px;width:620px;height:35px;background:#262626"></div>
<div class="t" style="left:8px;top:579px;font-size:15.500px;line-height:20px;height:20px;color:#3d9ad8;letter-spacing:1.15px">0:00:00:18</div>
<div class="t" style="left:11px;top:597px;font-size:9.500px;line-height:12px;height:12px;color:#3d9ad8;letter-spacing:0.08px">00018 (30.00 fps)</div>
<div class="a" style="left:104px;top:584px;width:316px;height:20px;background:#1d1d1d"></div>
<div class="a" style="left:0;top:612px;width:620px;height:1px;background:#111"></div>
<div class="a" style="left:0;top:613px;width:621px;height:18px;background:#2a2a2a"></div>
<div class="a" style="left:0;top:631px;width:620px;height:1px;background:#151515"></div>
<div class="t" style="left:104px;top:616px;color:#b0b0b0;font-style:italic">#</div>
<div class="t cj" style="left:137px;top:615px;color:#b0b0b0">源名称</div>
<div class="t cj" style="left:494px;top:615px;color:#b0b0b0">父级</div>
<div class="a" style="left:66px;top:614px;width:1px;height:16px;background:#151515"></div>
<div class="a" style="left:130px;top:614px;width:1px;height:16px;background:#151515"></div>
<div class="a" style="left:351px;top:614px;width:1px;height:16px;background:#151515"></div>
<div class="a" style="left:488px;top:614px;width:1px;height:16px;background:#151515"></div>
<div class="a" style="left:605px;top:614px;width:1px;height:16px;background:#151515"></div>
<div class="t" style="left:401px;top:615px;color:#c4c4c4;font-style:italic;font-weight:bold;font-size:12px">fx</div>
<div class="a" style="left:0;top:632px;width:621px;height:20px;background:#484848"></div>
<div class="a" style="left:3px;top:634px;width:13px;height:15px;background:#242424"></div>
<div class="a" style="left:18px;top:634px;width:13px;height:15px;background:#242424"></div>
<div class="a" style="left:33px;top:634px;width:13px;height:15px;background:#1c1c1c"></div>
<div class="a" style="left:48px;top:634px;width:13px;height:15px;background:#1c1c1c"></div>
<div class="a" style="left:84px;top:634px;width:15px;height:15px;background:#a8d5cf"></div>
<div class="t" style="left:106px;top:636px;color:#d0d0d0;font-family:'Liberation Serif',serif;font-size:12px">1</div>
<div class="a" style="left:153px;top:633px;width:198px;height:18px;background:#525252;border:1.500px solid #b4b4b4"></div>
<div class="t" style="left:157px;top:635px;color:#f0f0f0;font-weight:bold"><span class="cj" style="font-size:12px">医疗完整版</span><span style="font-size:11px">.MOV</span></div>
<div class="a" style="left:356px;top:634px;width:13px;height:14px;background:#222"></div>
<div class="a" style="left:386px;top:634px;width:13px;height:14px;background:#222"></div>
<div class="a" style="left:401px;top:634px;width:13px;height:14px;background:#222"></div>
<div class="t" style="left:401px;top:635px;color:#c4c4c4;font-style:italic;font-weight:bold;font-size:12px">fx</div>
<div class="a" style="left:416px;top:634px;width:13px;height:14px;background:#1e1e1e"></div>
<div class="a" style="left:431px;top:634px;width:13px;height:14px;background:#1e1e1e"></div>
<div class="a" style="left:446px;top:634px;width:13px;height:14px;background:#1e1e1e"></div>
<div class="a" style="left:461px;top:634px;width:13px;height:14px;background:#1e1e1e"></div>
<div class="a" style="left:511px;top:633px;width:90px;height:18px;background:#222"></div>
<div class="t cj" style="left:518px;top:635px;color:#d0d0d0">无</div>
<div class="a" style="left:0;top:652px;width:620px;height:1px;background:#1b1b1b"></div>
<div class="a" style="left:621px;top:577px;width:1px;height:445px;background:#050505"></div>
<div class="a" style="left:622px;top:652px;width:7px;height:370px;background:#2f2f2f;z-index:1"></div>
<div class="a" style="left:622px;top:577px;width:1276px;height:6px;background:#262626"></div>
<div class="a" style="left:622px;top:583px;width:1276px;height:8px;background:#5a5a5a"></div>
<div class="a" style="left:622px;top:591px;width:1276px;height:21px;background:#282828"></div>
<div class="a" style="left:622px;top:612px;width:1276px;height:15px;background:#5c5c5c;border-top:1px solid #1a1a1a"></div>
<div class="a" style="left:622px;top:627px;width:1276px;height:5px;background:#2a2a2a"></div>
<div class="a" style="left:1700px;top:628px;width:191px;height:3px;background:#22b845"></div>
<div class="a" style="left:622px;top:632px;width:1276px;height:20px;background:#4c4c4c"></div>
<div class="a" style="left:624px;top:634px;width:1076px;height:16px;background:linear-gradient(#9cc4be,#8fb9b3 50%,#86afa9)"></div>
<div class="a" style="left:622px;top:652px;width:1276px;height:370px;background:#353535"></div>
<div class="t" style="left:671.0px;top:593px;font-size:9.500px;color:#b0b0b0;line-height:12px;height:12px">01s</div>
<div class="t" style="left:721.4px;top:593px;font-size:9.500px;color:#b0b0b0;line-height:12px;height:12px">02s</div>
<div class="t" style="left:771.9px;top:593px;font-size:9.500px;color:#b0b0b0;line-height:12px;height:12px">03s</div>
<div class="t" style="left:822.3px;top:593px;font-size:9.500px;color:#b0b0b0;line-height:12px;height:12px">04s</div>
<div class="t" style="left:872.7px;top:593px;font-size:9.500px;color:#b0b0b0;line-height:12px;height:12px">05s</div>
<div class="t" style="left:923.1px;top:593px;font-size:9.500px;color:#b0b0b0;line-height:12px;height:12px">06s</div>
<div class="t" style="left:973.5px;top:593px;font-size:9.500px;color:#b0b0b0;line-height:12px;height:12px">07s</div>
<div class="t" style="left:1024.0px;top:593px;font-size:9.500px;color:#b0b0b0;line-height:12px;height:12px">08s</div>
<div class="t" style="left:1074.4px;top:593px;font-size:9.500px;color:#b0b0b0;line-height:12px;height:12px">09s</div>
<div class="t" style="left:1124.8px;top:593px;font-size:9.500px;color:#b0b0b0;line-height:12px;height:12px">10s</div>
<div class="t" style="left:1175.2px;top:593px;font-size:9.500px;color:#b0b0b0;line-height:12px;height:12px">11s</div>
<div class="t" style="left:1225.6px;top:593px;font-size:9.500px;color:#b0b0b0;line-height:12px;height:12px">12s</div>
<div class="t" style="left:1276.1px;top:593px;font-size:9.500px;color:#b0b0b0;line-height:12px;height:12px">13s</div>
<div class="t" style="left:1326.5px;top:593px;font-size:9.500px;color:#b0b0b0;line-height:12px;height:12px">14s</div>
<div class="t" style="left:1376.9px;top:593px;font-size:9.500px;color:#b0b0b0;line-height:12px;height:12px">15s</div>
<div class="t" style="left:1427.3px;top:593px;font-size:9.500px;color:#b0b0b0;line-height:12px;height:12px">16s</div>
<div class="t" style="left:1477.7px;top:593px;font-size:9.500px;color:#b0b0b0;line-height:12px;height:12px">17s</div>
<div class="t" style="left:1528.2px;top:593px;font-size:9.500px;color:#b0b0b0;line-height:12px;height:12px">18s</div>
<div class="t" style="left:1578.6px;top:593px;font-size:9.500px;color:#b0b0b0;line-height:12px;height:12px">19s</div>
<div class="t" style="left:1629.0px;top:593px;font-size:9.500px;color:#b0b0b0;line-height:12px;height:12px">20s</div>
<div class="t" style="left:1679.4px;top:593px;font-size:9.500px;color:#b0b0b0;line-height:12px;height:12px">21s</div>
<div class="t" style="left:1729.8px;top:593px;font-size:9.500px;color:#b0b0b0;line-height:12px;height:12px">22s</div>
<div class="t" style="left:1780.3px;top:593px;font-size:9.500px;color:#b0b0b0;line-height:12px;height:12px">23s</div>
<div class="t" style="left:1830.7px;top:593px;font-size:9.500px;color:#b0b0b0;line-height:12px;height:12px">24s</div>
<div class="t" style="left:1881.1px;top:593px;font-size:9.500px;color:#b0b0b0;line-height:12px;height:12px">25s</div>
<div class="a" style="left:622px;top:591px;width:30px;height:14px;overflow:hidden"><div class="t" style="left:-3px;top:2px;font-size:9.500px;color:#b0b0b0;line-height:12px;height:12px">0:00s</div></div>
<div class="a" style="left:1898px;top:577px;width:18px;height:55px;background:#282828"></div>
<div class="a" style="left:1898px;top:632px;width:18px;height:390px;background:#1d1d1d;border-top:1px solid #111"></div>
<div class="a" style="left:1898px;top:1022px;width:18px;height:16px;background:#282828"></div>
<div class="a" style="left:0;top:1021px;width:1898px;height:1px;background:#0c0c0c"></div>
<div class="a" style="left:0;top:1022px;width:1898px;height:16px;background:#1d1d1d"></div>
<div class="a" style="left:354px;top:1022px;width:134px;height:16px;background:#191919"></div>
<div class="t cj" style="left:386px;top:1022px;font-size:11px;color:#d8d8d8;letter-spacing:0.7px">切换开关/模式</div>
<div class="t" style="left:40px;top:1022px;font-size:12px;color:#c4c4c4;font-weight:bold;letter-spacing:-1px">{}</div>
<div class="t" style="left:1422px;top:972px;font-size:40px;line-height:52px;height:52px;color:#e2e2e2;font-weight:500;font-family:'Noto Sans CJK SC','Liberation Sans',sans-serif;text-shadow:1px 2px 2px rgba(0,0,0,0.7);letter-spacing:-0.3px">头条号 / 视频制作那些事儿</div>
<div class="a" style="left:1889px;top:652px;width:9px;height:370px;background:#2b2b2b"></div>
<div class="a" style="left:1898px;top:843px;width:47px;height:47px;border-radius:50%;background:radial-gradient(circle at 45% 30%,#62dc7c,#3cc456 55%,#30b049 100%);border:2px solid #e6f6e8"></div>
<div class="t" style="left:1904px;top:858px;font-size:12px;font-weight:bold;color:#f0fff0;font-family:'Liberation Serif',serif">31</div>
<svg style="left:0;top:0" width="1916" height="1038" viewBox="0 0 1916 1038">
<g stroke="#c4c4c4" stroke-width="1.300"><path d="M690 559.500h7M690 562.500h7M690 565.500h7"/></g>
<circle cx="118.500" cy="592.500" r="3.800" fill="none" stroke="#c4c4c4" stroke-width="1.400"/><path d="M115.800 595.400l-4.500 4.500" stroke="#c4c4c4" stroke-width="1.700"/><path d="M122.500 596.500h4l-2 2.500z" fill="#c4c4c4"/>
<g fill="#b4b4b4" stroke="#b4b4b4" stroke-width="1.100"><rect x="435" y="589" width="5" height="3"/><rect x="445" y="589" width="5" height="3"/><rect x="445" y="595" width="5" height="3"/><path d="M440 590.500h5M442.500 590.500v6h3" fill="none"/><path d="M447 600.500h4l-2 2.500z" stroke="none"/></g>
<g stroke="#b4b4b4" stroke-width="1.200" fill="none"><path d="M471.500 585v7M468 588.500h7M469 586l5 5M474 586l-5 5"/><path d="M477 593l4-2 4 2v5l-4 2.500-4-2.500z M477 593l4 2 4-2M481 595v5.500"/></g>
<g fill="#b4b4b4"><path d="M505 593a5 5 0 0 1 10 0z"/><rect x="508.500" y="593" width="3" height="4"/><path d="M502 601.500v-4h4l1 1.500h6l1-1.500h4v4z"/></g>
<g fill="#8a8a8a" stroke="#b4b4b4" stroke-width="1"><rect x="530.500" y="590.500" width="9" height="11"/><rect x="534.500" y="587.500" width="9" height="11"/><path d="M536.500 587.500v11M541.500 587.500v11" stroke-width="0.800"/></g>
<g fill="#8a8a8a" stroke="#b4b4b4" stroke-width="1.100"><circle cx="561.500" cy="596" r="5"/><circle cx="563.500" cy="594" r="5"/><circle cx="565.500" cy="592" r="5"/></g>
<g stroke="#b4b4b4" stroke-width="1.200" fill="none"><rect x="589.500" y="589.500" width="15" height="12"/><path d="M591 599c4 0 5-7 12-7"/><path d="M592 587.500v2M597 587.500v2M602 587.500v2" stroke-width="1.600"/></g>
<path d="M3 622 q6 -6.500 12 0 q-6 6.500 -12 0z" fill="none" stroke="#c4c4c4" stroke-width="1.200"/><circle cx="9" cy="622" r="2" fill="#c4c4c4"/>
<path d="M19 620h2.500l3.500-3v10l-3.500-3h-2.500z" fill="#c4c4c4"/><path d="M27 619.5q2 2.500 0 5M29 617.5q3.500 4.500 0 9" stroke="#c4c4c4" stroke-width="1" fill="none"/>
<circle cx="39.500" cy="622.500" r="3" fill="#c4c4c4"/>
<rect x="50" y="621" width="7.500" height="6" rx="0.800" fill="#c4c4c4"/><path d="M51.500 621v-2a2.200 2.200 0 0 1 4.400 0v2" fill="none" stroke="#c4c4c4" stroke-width="1.300"/>
<path d="M83 624l6-6h5v5l-6 6z" fill="#c4c4c4"/><circle cx="91.500" cy="620.500" r="1" fill="#262626"/>
<g fill="#c4c4c4"><path d="M357 623a5 5 0 0 1 10 0z"/><rect x="361" y="623" width="2" height="4"/><path d="M358.500 625.500q1.500 2.500 3 0M363 625.500q1.500 2.500 3 0" stroke="#c4c4c4" fill="none"/></g>
<g stroke="#c4c4c4" stroke-width="1.100"><path d="M377 618v9M372.500 622.500h9M374 619.500l6 6M380 619.500l-6 6"/></g>
<path d="M386.500 618.500l8 8" stroke="#c4c4c4" stroke-width="1.200" stroke-dasharray="2 1"/>
<g stroke="#c4c4c4" stroke-width="1" fill="#8a8a8a"><rect x="417.500" y="618.500" width="9" height="8"/><path d="M419.500 618.500v8M424.500 618.500v8M419.500 621.500h5M419.500 624.500h5" fill="none"/></g>
<g stroke="#c4c4c4" stroke-width="1" fill="#8a8a8a"><circle cx="436" cy="624" r="3.500"/><circle cx="439" cy="621" r="3.500"/></g>
<circle cx="452.500" cy="622.500" r="4.500" fill="#e8e8e8"/><path d="M452.500 618a4.500 4.500 0 0 0 0 9z" fill="#111"/><circle cx="452.500" cy="622.500" r="4.500" fill="none" stroke="#c4c4c4" stroke-width="1"/>
<g stroke="#c4c4c4" stroke-width="1.100" fill="none"><path d="M462 620l5-2 5 2v5.500l-5 2.500-5-2.500z M462 620l5 2 5-2M467 622v6"/></g>
<path d="M3 642 q6 -6.500 12 0 q-6 6.500 -12 0z" fill="none" stroke="#c4c4c4" stroke-width="1.200"/><circle cx="9" cy="642" r="2" fill="#c4c4c4"/>
<path d="M19 640h2.500l3.500-3v10l-3.500-3h-2.500z" fill="#c4c4c4"/><path d="M27 639.5q2 2.500 0 5M29 637.5q3.500 4.500 0 9" stroke="#c4c4c4" stroke-width="1" fill="none"/>
<path d="M72 637.500l7 4.500-7 4.500z" fill="#c4c4c4"/>
<rect x="136" y="634" width="12" height="15" rx="1" fill="#e8e8f4" stroke="#5a5aa8" stroke-width="0.800"/><rect x="138" y="635.500" width="8" height="4" fill="#5a4ab0"/><circle cx="142" cy="644.500" r="3.200" fill="#2a9ad8"/>
<g fill="#c4c4c4"><path d="M357 643a5 5 0 0 1 10 0z"/><rect x="361" y="643" width="2" height="4"/><path d="M358.500 645.500q1.500 2.500 3 0M363 645.500q1.500 2.500 3 0" stroke="#c4c4c4" fill="none"/></g>
<path d="M387 646.500l8-9" stroke="#c4c4c4" stroke-width="1.300"/>
<path d="M498 642a1.500 1.500 0 1 1 1.500 1.500a3 3 0 1 1 3-3a4.500 4.500 0 1 1-4.500-4.500" fill="none" stroke="#b0b0b0" stroke-width="1.100" transform="translate(-1 1)"/>
<path d="M587 639.500h9l-4.500 5z" fill="#c8c8c8"/>
<path d="M1693 634h7v7z" fill="#1a2a2a"/>
<path d="M680.0 606.500v5" stroke="#9a9a9a" stroke-width="1"/>
<path d="M730.4 606.500v5" stroke="#9a9a9a" stroke-width="1"/>
<path d="M780.9 606.500v5" stroke="#9a9a9a" stroke-width="1"/>
<path d="M831.3 606.500v5" stroke="#9a9a9a" stroke-width="1"/>
<path d="M881.7 606.500v5" stroke="#9a9a9a" stroke-width="1"/>
<path d="M932.1 606.500v5" stroke="#9a9a9a" stroke-width="1"/>
<path d="M982.5 606.500v5" stroke="#9a9a9a" stroke-width="1"/>
<path d="M1033.0 606.500v5" stroke="#9a9a9a" stroke-width="1"/>
<path d="M1083.4 606.500v5" stroke="#9a9a9a" stroke-width="1"/>
<path d="M1133.8 606.500v5" stroke="#9a9a9a" stroke-width="1"/>
<path d="M1184.2 606.500v5" stroke="#9a9a9a" stroke-width="1"/>
<path d="M1234.6 606.500v5" stroke="#9a9a9a" stroke-width="1"/>
<path d="M1285.1 606.500v5" stroke="#9a9a9a" stroke-width="1"/>
<path d="M1335.5 606.500v5" stroke="#9a9a9a" stroke-width="1"/>
<path d="M1385.9 606.500v5" stroke="#9a9a9a" stroke-width="1"/>
<path d="M1436.3 606.500v5" stroke="#9a9a9a" stroke-width="1"/>
<path d="M1486.7 606.500v5" stroke="#9a9a9a" stroke-width="1"/>
<path d="M1537.2 606.500v5" stroke="#9a9a9a" stroke-width="1"/>
<path d="M1587.6 606.500v5" stroke="#9a9a9a" stroke-width="1"/>
<path d="M1638.0 606.500v5" stroke="#9a9a9a" stroke-width="1"/>
<path d="M1688.4 606.500v5" stroke="#9a9a9a" stroke-width="1"/>
<path d="M1738.8 606.500v5" stroke="#9a9a9a" stroke-width="1"/>
<path d="M1789.3 606.500v5" stroke="#9a9a9a" stroke-width="1"/>
<path d="M1839.7 606.500v5" stroke="#9a9a9a" stroke-width="1"/>
<path d="M1890.1 606.500v5" stroke="#9a9a9a" stroke-width="1"/>
<path d="M623 587a4 4 0 0 1 4-4h2v8h-2a4 4 0 0 1-4-4z" fill="#3cb2ea"/><path d="M626.500 584.500v5" stroke="#1a5a8a" stroke-width="1"/><path d="M1898 587a4 4 0 0 0-4-4h-2v8h2a4 4 0 0 0 4-4z" fill="#3cb2ea"/><path d="M1894.500 584.500v5" stroke="#1a5a8a" stroke-width="1"/>
<rect x="623" y="613" width="6" height="14" rx="1.500" fill="#3cb2ea"/><rect x="1892" y="613" width="6" height="14" rx="1.500" fill="#3cb2ea"/><path d="M626 615v10M1895 615v10" stroke="#1a4a78" stroke-width="1"/>
<rect x="658" y="583" width="3" height="8" fill="#7aa0c0"/>
<path d="M659.500 600v422" stroke="#2f8fd0" stroke-width="1"/>
<path d="M654 596.500h11v6l-5.500 7-5.500-7z" fill="#3d9ee0"/><path d="M657.500 598v3M659.500 598v3M661.500 598v3" stroke="#fff" stroke-width="0.800"/>
<path d="M1902.500 614.500h10v8l-5 5-5-5z" fill="#6a6a6a" stroke="#b0b0b0" stroke-width="1"/>
<g stroke="#b0b0b0" stroke-width="1.100" fill="#6a6a6a"><circle cx="1905" cy="641" r="4.500"/><rect x="1906.500" y="639.500" width="6" height="5" fill="#1d1d1d"/><path d="M1901 648.500h8"/></g>
<g stroke="#3d9ee0" stroke-width="1.200" fill="#1d5a8a"><rect x="4.500" y="1024.500" width="8" height="7"/><rect x="8.500" y="1028.500" width="8" height="7"/></g>
<g stroke="#c4c4c4" stroke-width="1.200" fill="none"><circle cx="27" cy="1028.500" r="4"/><rect x="28.500" y="1029.500" width="6" height="6"/></g>
<path d="M627 1033l4.500-4 4.500 4z" fill="#b0b0b0"/><path d="M648 1036v-7l5-4 5 4v7z" fill="#8a8a8a"/><path d="M660 1030.500h35" stroke="#3a3a3a" stroke-width="1"/><path d="M707 1033l6-6 3 3 3-3 6 6z" fill="#b0b0b0"/>
</svg><!--TIMELINE-END-->
</body>
</html>
